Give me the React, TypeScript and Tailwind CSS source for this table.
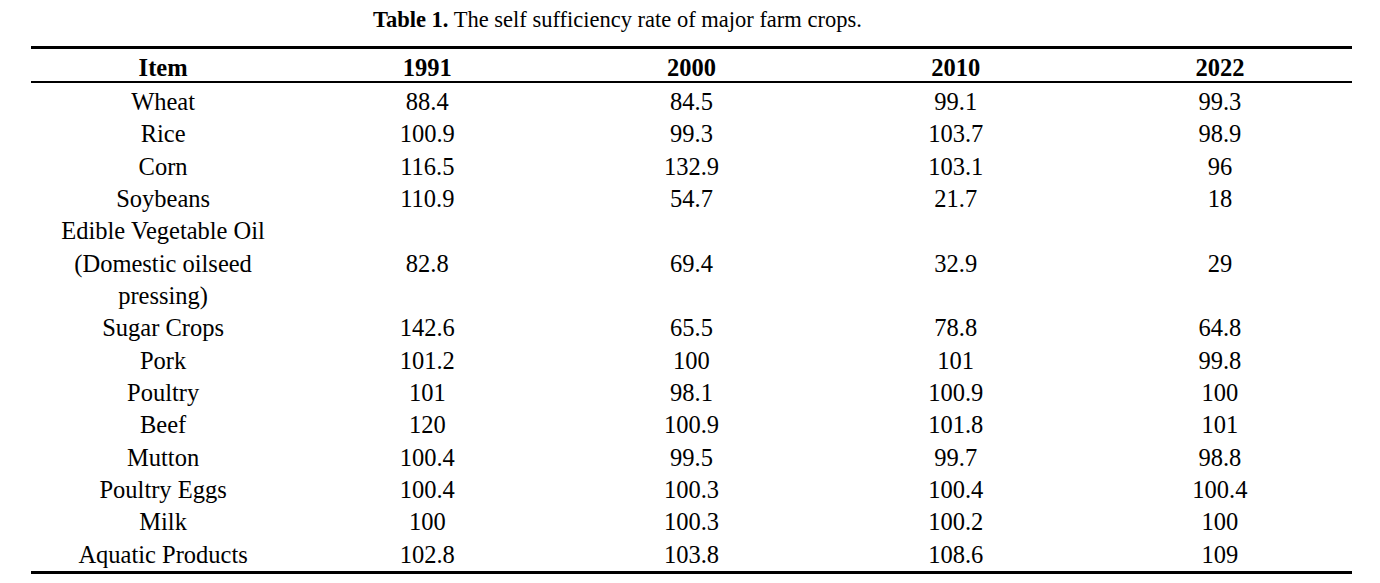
import React from "react";

const rows: [string[], string, string, string, string][] = [
  [["Wheat"], "88.4", "84.5", "99.1", "99.3"],
  [["Rice"], "100.9", "99.3", "103.7", "98.9"],
  [["Corn"], "116.5", "132.9", "103.1", "96"],
  [["Soybeans"], "110.9", "54.7", "21.7", "18"],
  [["Edible Vegetable Oil", "(Domestic oilseed", "pressing)"], "82.8", "69.4", "32.9", "29"],
  [["Sugar Crops"], "142.6", "65.5", "78.8", "64.8"],
  [["Pork"], "101.2", "100", "101", "99.8"],
  [["Poultry"], "101", "98.1", "100.9", "100"],
  [["Beef"], "120", "100.9", "101.8", "101"],
  [["Mutton"], "100.4", "99.5", "99.7", "98.8"],
  [["Poultry Eggs"], "100.4", "100.3", "100.4", "100.4"],
  [["Milk"], "100", "100.3", "100.2", "100"],
  [["Aquatic Products"], "102.8", "103.8", "108.6", "109"],
];

export default function App() {
  return (
    <div className="w-[1380px] h-[583px] bg-white text-black font-['Liberation_Serif',_'Times_New_Roman',_serif] overflow-hidden">
      <div className="pt-[6px] pl-[373px] text-[22.5px] leading-[28px] whitespace-nowrap">
        <span className="font-bold">Table 1.</span> The self sufficiency rate of major farm crops.
      </div>
      <div className="ml-[31px] mt-[12px] w-[1321px] border-t-[3px] border-b-[3px] border-black text-[24.5px]">
        <div className="grid grid-cols-5 pt-[5px] leading-[27px] font-bold text-center border-b-2 border-black">
          <div>Item</div>
          <div>1991</div>
          <div>2000</div>
          <div>2010</div>
          <div>2022</div>
        </div>
        <div className="pt-[3px] leading-[32.33px] text-center">
          {rows.map(([item, a, b, c, d], i) => (
            <div key={i} className="grid grid-cols-5 items-center">
              <div>
                {item.map((t, j) => (
                  <div key={j}>{t}</div>
                ))}
              </div>
              <div>{a}</div>
              <div>{b}</div>
              <div>{c}</div>
              <div>{d}</div>
            </div>
          ))}
        </div>
      </div>
    </div>
  );
}
